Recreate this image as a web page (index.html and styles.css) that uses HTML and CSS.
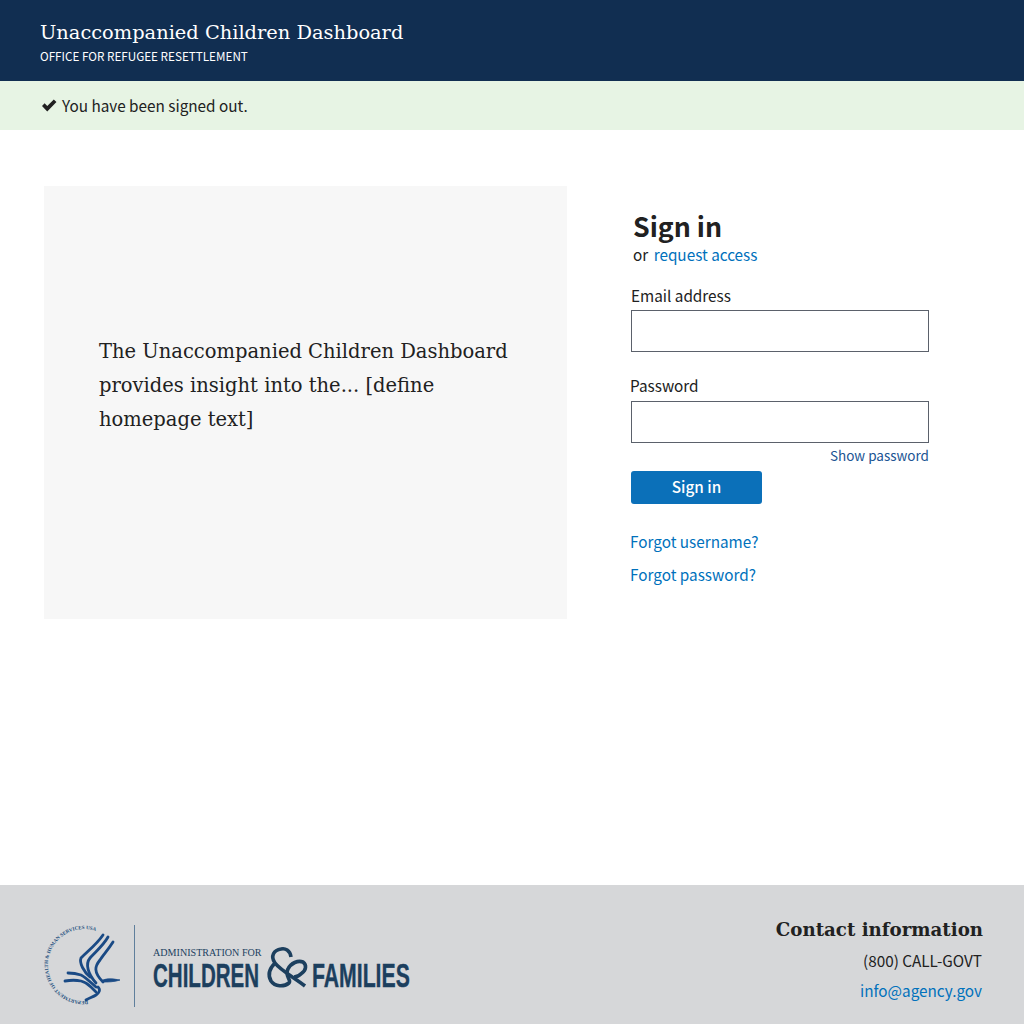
FILE: index.html
```html
<!DOCTYPE html>
<html lang="en">
<head>
    <meta charset="UTF-8">
    <meta name="viewport" content="width=device-width, initial-scale=1.0">
    <title>Unaccompanied Children Dashboard</title>
    <link rel="stylesheet" href="styles.css">
</head>
<body>
    <header class="site-header">
        <div class="site-title">Unaccompanied Children Dashboard</div>
        <div class="site-office">OFFICE FOR REFUGEE RESETTLEMENT</div>
    </header>

    <div class="flash">
        <svg class="check" viewBox="0 0 16 13" aria-hidden="true">
            <path d="M0 7 L2.8 4.2 L5.6 7 L12.6 0 L15.4 2.8 L5.6 12.8 Z"/>
        </svg>
        <span>You have been signed out.</span>
    </div>

    <main class="main">
        <section class="intro">
            <p>The Unaccompanied Children Dashboard provides insight into the... [define homepage text]</p>
        </section>

        <section class="signin">
            <h1>Sign in</h1>
            <p class="signin-sub">or <a href="#">request access</a></p>
            <form>
                <label for="email">Email address</label>
                <input type="text" id="email" name="email">
                <label for="password" class="label-password">Password</label>
                <input type="password" id="password" name="password">
                <div class="show-password"><a href="#">Show password</a></div>
                <button type="button">Sign in</button>
            </form>
            <p class="forgot"><a href="#">Forgot username?</a></p>
            <p class="forgot"><a href="#">Forgot password?</a></p>
        </section>
    </main>

    <footer class="site-footer">
        <div class="logos">
            <svg class="seal" viewBox="0 0 90 90" aria-hidden="true">
                <defs>
                    <path id="sealRing" d="M50 80.8 A36 36 0 1 1 66.5 15.5"/>
                </defs>
                <text class="seal-text"><textPath href="#sealRing">DEPARTMENT OF HEALTH &amp; HUMAN SERVICES USA</textPath></text>
                <g class="eagle">
                    <path d="M75 22 C70 30 65 35 62 40 C57 46 55 52 65 62"/>
                    <path d="M70 17 C65 26 57 32 52 38 C47 44 50 54 58 63"/>
                    <path d="M65 15 C59 24 50 31 43 38 C41 43 46 52 52 57"/>
                    <path d="M30 53 C36 53 40 54 43 55 C47 57 50 60 58 67"/>
                    <path d="M27 61 C33 60 38 60 43 61 C47 62 50 64 53 67 C55 69 57 71 58 72"/>
                    <path d="M60 67 C63 70 61 73 58 75 C55 77 51 78 48 80"/>
                    <path class="beak" d="M65 60 C70 58 76 59 82 60 C76 62 70 62 65 62 Z"/>
                </g>
            </svg>
            <div class="logo-rule"></div>
            <svg class="acf" viewBox="0 0 262 60" aria-hidden="true">
                <text class="acf-small" x="1" y="24">ADMINISTRATION FOR</text>
                <text class="acf-big" transform="translate(1 55) scale(0.604 1)">CHILDREN</text>
                <text class="acf-big" transform="translate(160 55) scale(0.624 1)">FAMILIES</text>
                <g class="amp">
                    <path d="M139 25 C138 18 133 16 129 17 C122 18 118 24 123 31 C128 38 143 46 153 54"/>
                    <path d="M123 31 C118 36 115 42 119 49 C123 55 132 55 137 51 C140 48 132 44 136 37 C139 31 146 28 151 30 C155 33 154 38 150 41 C147 44 144 45 142 45"/>
                </g>
            </svg>
        </div>
        <div class="contact">
            <h2>Contact information</h2>
            <div class="contact-line">(800) CALL-GOVT</div>
            <div class="contact-line"><a href="#">info@agency.gov</a></div>
        </div>
    </footer>
</body>
</html>
```

FILE: styles.css
```css
body {
    font-family: "Noto Sans CJK JP", "Source Sans Pro", sans-serif;
    font-size: 15.3px;
    color: #212121;
    margin: 0;
    padding: 0;
    background-color: #fff;
    display: flex;
    flex-direction: column;
    height: 1024px;
}

a {
    color: #0071bc;
    text-decoration: none;
}

.site-header {
    background-color: #112e51;
    color: #fff;
    height: 81px;
    box-sizing: border-box;
    padding: 20px 40px 0;
}

.site-title {
    font-family: "DejaVu Serif", serif;
    font-size: 19.4px;
    line-height: 25px;
}

.site-office {
    font-size: 11.7px;
    line-height: 20px;
    padding-top: 1px;
}

.flash {
    background-color: #e7f4e4;
    height: 49px;
    box-sizing: border-box;
    padding-left: 42px;
    display: flex;
    align-items: center;
    gap: 5px;
}

.flash span {
    padding-bottom: 2px;
}

.check {
    width: 15px;
    height: 13px;
    fill: #212121;
}

.main {
    flex: 1;
    display: flex;
    padding: 56px 0 0 44px;
}

.intro {
    width: 523px;
    height: 433px;
    background-color: #f7f7f7;
    box-sizing: border-box;
    padding: 0 55px 34px;
    display: flex;
    align-items: center;
}

.intro p {
    font-family: "DejaVu Serif", serif;
    font-size: 19.5px;
    line-height: 34px;
    margin: 0;
}

.signin {
    width: 298px;
    margin-left: 64px;
    padding-top: 20px;
}

.signin h1 {
    font-size: 26.7px;
    font-weight: 700;
    line-height: 36px;
    padding-top: 2px;
    margin: 0 0 0 2px;
}

.signin-sub {
    margin: 0 0 0 2px;
    line-height: 20px;
}

.signin-sub a {
    margin-left: 2px;
}

label {
    display: block;
    line-height: 22px;
    margin-top: 20px;
    margin-bottom: 4px;
}

.label-password {
    margin-top: 22px;
    margin-bottom: 5px;
    margin-left: -1px;
}

input[type="text"],
input[type="password"] {
    display: block;
    width: 100%;
    height: 42px;
    box-sizing: border-box;
    border: 1px solid #5b616b;
    border-radius: 0;
    padding: 0 8px;
    margin: 0;
}

.show-password {
    text-align: right;
    font-size: 13.5px;
    line-height: 20px;
    margin-top: 2px;
}

.show-password a {
    color: #205493;
}

button {
    display: block;
    width: 131px;
    height: 33px;
    margin-top: 6px;
    padding: 0 0 3px;
    background-color: #0b70b9;
    color: #fff;
    font-family: inherit;
    font-size: 15.3px;
    font-weight: 500;
    border: 0;
    border-radius: 3px;
    cursor: pointer;
}

.forgot {
    margin: 0 0 0 -1px;
    line-height: 22px;
    padding-bottom: 11px;
}

form + .forgot {
    margin-top: 26px;
}

.site-footer {
    background-color: #d6d7d9;
    height: 139px;
    box-sizing: border-box;
    padding: 0 41px 0 38px;
    display: flex;
    justify-content: space-between;
}

.logos {
    display: flex;
    align-items: flex-start;
    padding-top: 35px;
}

.seal {
    width: 90px;
    height: 90px;
    overflow: visible;
}

.seal-text {
    font-family: "Liberation Serif", serif;
    font-size: 5px;
    font-weight: 700;
    fill: #24507e;
}

.eagle path {
    fill: none;
    stroke: #1a4a85;
    stroke-width: 2.8;
    stroke-linecap: round;
}

.eagle .beak {
    fill: #1a4a85;
    stroke-width: 0.8;
}

.logo-rule {
    width: 1px;
    height: 82px;
    margin: 5px 0 0 6px;
    background-color: #5f7f9c;
}

.acf {
    width: 262px;
    height: 60px;
    margin: 12px 0 0 17px;
    overflow: visible;
}

.acf-small {
    font-family: "Liberation Serif", serif;
    font-size: 10.1px;
    fill: #21415f;
}

.acf-big {
    font-family: "Liberation Sans", sans-serif;
    font-size: 34px;
    font-weight: 700;
    fill: #1c3f5e;
    stroke: #1c3f5e;
    stroke-width: 0.4;
}

.amp path {
    fill: none;
    stroke: #1c3f5e;
    stroke-width: 3.6;
}

.contact {
    text-align: right;
    padding-top: 30px;
}

.contact h2 {
    font-family: "DejaVu Serif", serif;
    font-size: 18.2px;
    font-weight: 700;
    line-height: 30px;
    margin: 0;
}

.contact-line {
    line-height: 30px;
    margin-right: 1px;
}
```
